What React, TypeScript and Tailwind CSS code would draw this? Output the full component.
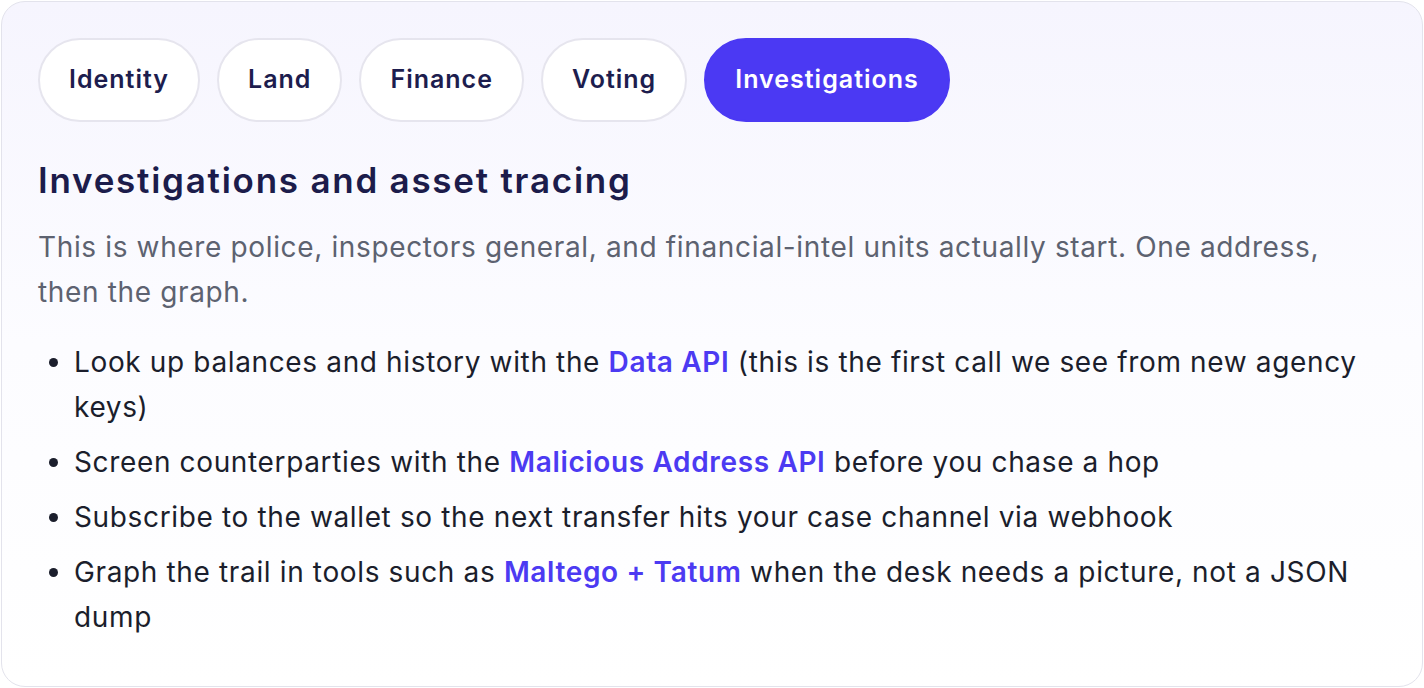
import React from 'react'

const tabs = ['Identity', 'Land', 'Finance', 'Voting', 'Investigations']

function Link({ children }: { children: React.ReactNode }) {
  return <a className="font-semibold text-[#4c3af2]">{children}</a>
}

export default function App() {
  const active = 'Investigations'
  return (
    <div className="h-[688px] w-full bg-white p-px" style={{ fontFamily: 'Inter, "Noto Sans", sans-serif' }}>
      <div className="h-[686px] rounded-[24px] border border-[#e3e3ec] bg-gradient-to-b from-[#f6f5fe] via-[#fcfcff] to-white px-[36px] pt-[36px]">
        <div className="flex gap-[17px]">
          {tabs.map((t) => (
            <button
              key={t}
              className={
                t === active
                  ? 'h-[84px] rounded-full border-2 border-[#4b39f3] bg-[#4b39f3] px-[29px] text-[25px] font-semibold tracking-[0.04em] text-white'
                  : 'h-[84px] rounded-full border-2 border-[#e6e5ee] bg-white px-[29px] text-[25px] font-semibold tracking-[0.04em] text-[#1d1d4e]'
              }
            >
              {t}
            </button>
          ))}
        </div>

        <h2 className="mt-[38px] text-[35px] font-semibold leading-[40px] tracking-[0.05em] text-[#1c1c4b]">
          Investigations and asset tracing
        </h2>

        <div className="tracking-[0.04em]">
          <p className="mt-[25px] max-w-[1320px] text-[28px] leading-[45px] text-[#5d6270]">
            This is where police, inspectors general, and financial-intel units actually start. One address,
            then the graph.
          </p>

          <ul className="mt-[25px] list-disc pl-[36px] text-[28px] leading-[45px] text-[#1b1e2c] marker:text-[#1b1e2c]">
            <li>
              Look up balances and history with the <Link>Data API</Link> (this is the first call we see from new
              agency keys)
            </li>
            <li className="mt-[10px]">
              Screen counterparties with the <Link>Malicious Address API</Link> before you chase a hop
            </li>
            <li className="mt-[10px]">
              Subscribe to the wallet so the next transfer hits your case channel via webhook
            </li>
            <li className="mt-[10px]">
              Graph the trail in tools such as <Link>Maltego + Tatum</Link> when the desk needs a picture, not a
              JSON dump
            </li>
          </ul>
        </div>
      </div>
    </div>
  )
}
